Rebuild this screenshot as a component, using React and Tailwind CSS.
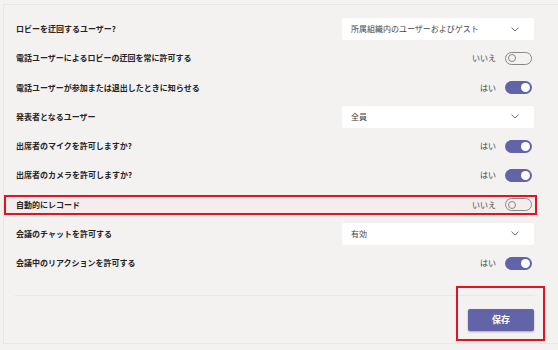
const rows = [
  { label: "ロビーを迂回するユーザー?", type: "select", value: "所属組織内のユーザーおよびゲスト" },
  { label: "電話ユーザーによるロビーの迂回を常に許可する", type: "toggle", on: false },
  { label: "電話ユーザーが参加または退出したときに知らせる", type: "toggle", on: true },
  { label: "発表者となるユーザー", type: "select", value: "全員" },
  { label: "出席者のマイクを許可しますか?", type: "toggle", on: true },
  { label: "出席者のカメラを許可しますか?", type: "toggle", on: true },
  { label: "自動的にレコード", type: "toggle", on: false, marked: true },
  { label: "会議のチャットを許可する", type: "select", value: "有効" },
  { label: "会議中のリアクションを許可する", type: "toggle", on: true },
];

function Chevron() {
  return (
    <svg width="8" height="5" viewBox="0 0 8 5" fill="none">
      <path d="M0.5 0.7 L4 4 L7.5 0.7" stroke="#605e5c" strokeWidth="0.9" />
    </svg>
  );
}

function Select({ value }) {
  return (
    <div className="w-[192px] h-[22px] bg-white rounded-[2px] flex items-center justify-between pl-[9px] pr-[15px] text-[8px] text-[#484644]">
      <span>{value}</span>
      <Chevron />
    </div>
  );
}

function Toggle({ on }) {
  return (
    <div className="flex items-center gap-[9px] mr-[2px]">
      <span className="text-[8px] text-[#484644]">{on ? "はい" : "いいえ"}</span>
      {on ? (
        <div className="w-[27px] h-[13px] rounded-full bg-[#6264a7] flex items-center justify-end pr-[2px]">
          <div className="w-[9px] h-[9px] rounded-full bg-white" />
        </div>
      ) : (
        <div className="w-[27px] h-[13px] rounded-full border border-[#8a8886] flex items-center pl-[2px]">
          <div className="w-[8px] h-[8px] rounded-full border border-[#8a8886]" />
        </div>
      )}
    </div>
  );
}

function Row({ row }) {
  const control = row.type === "select" ? <Select value={row.value} /> : <Toggle on={row.on} />;
  if (row.marked) {
    return (
      <div className="h-[29.25px] flex items-center">
        <div className="mr-[21px] flex-1 h-[20px] border-2 border-[#e81123] bg-[#f3eded] flex items-center justify-between pl-[10px] pr-[1px]">
          <span className="text-[8px] font-bold text-[#252423]">{row.label}</span>
          {control}
        </div>
      </div>
    );
  }
  return (
    <div className="h-[29.25px] flex items-center justify-between pl-[12px] pr-[24px]">
      <span className="text-[8px] font-bold text-[#252423]">{row.label}</span>
      {control}
    </div>
  );
}

export default function App() {
  return (
    <div
      className="w-[558px] h-[350px] bg-[#f3f2f1] pt-[4px] overflow-hidden"
      style={{ fontFamily: '"Noto Sans CJK JP", "Noto Sans", sans-serif' }}
    >
      <div className="ml-[3px] h-[340px] border-t border-l border-b border-[#e9e7e5] flex flex-col">
        <div className="pt-[9.5px]">
          {rows.map((r) => (
            <Row key={r.label} row={r} />
          ))}
        </div>
        <div className="mt-[17px] ml-[11px] mr-[23px] border-t border-[#e9e7e5]" />
        <div className="flex justify-end pr-[24px] mt-[13px]">
          <div className="relative">
            <button className="block w-[66px] h-[22px] bg-[#6264a7] rounded-[2px] text-white text-[9px] font-bold shadow-[0_1px_2px_rgba(0,0,0,0.3)]">
              保存
            </button>
            <div className="absolute left-[-12px] top-[-23px] right-[-11px] bottom-[-10px] border-2 border-[#e81123]" />
          </div>
        </div>
      </div>
    </div>
  );
}
